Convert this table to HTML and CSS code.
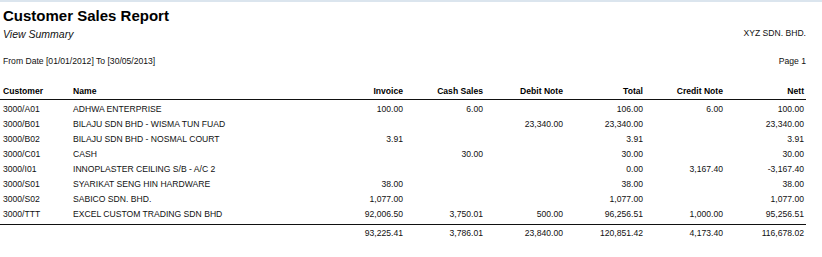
FILE: index.html
```html
<!DOCTYPE html>
<html>
<head>
<meta charset="utf-8">
<link rel="stylesheet" href="styles.css">
</head>
<body>
<div class="page">
  <div class="topbar"></div>
  <div class="head">
    <div class="head-left">
      <h1 class="title">Customer Sales Report</h1>
      <div class="subtitle">View Summary</div>
    </div>
    <div class="company">XYZ SDN. BHD.</div>
  </div>
  <div class="meta">
    <div>From Date [01/01/2012] To [30/05/2013]</div>
    <div>Page 1</div>
  </div>
  <table class="report">
    <colgroup>
      <col class="c-cust"><col class="c-name"><col class="c-num"><col class="c-num"><col class="c-num"><col class="c-num"><col class="c-num"><col class="c-nett">
    </colgroup>
    <thead>
      <tr>
        <th class="l first">Customer</th><th class="l">Name</th><th>Invoice</th><th>Cash Sales</th><th>Debit Note</th><th>Total</th><th>Credit Note</th><th class="last">Nett</th>
      </tr>
    </thead>
    <tbody>
      <tr><td class="l first">3000/A01</td><td class="l">ADHWA ENTERPRISE</td><td>100.00</td><td>6.00</td><td></td><td>106.00</td><td>6.00</td><td class="last">100.00</td></tr>
      <tr><td class="l first">3000/B01</td><td class="l">BILAJU SDN BHD - WISMA TUN FUAD</td><td></td><td></td><td>23,340.00</td><td>23,340.00</td><td></td><td class="last">23,340.00</td></tr>
      <tr><td class="l first">3000/B02</td><td class="l">BILAJU SDN BHD - NOSMAL COURT</td><td>3.91</td><td></td><td></td><td>3.91</td><td></td><td class="last">3.91</td></tr>
      <tr><td class="l first">3000/C01</td><td class="l">CASH</td><td></td><td>30.00</td><td></td><td>30.00</td><td></td><td class="last">30.00</td></tr>
      <tr><td class="l first">3000/I01</td><td class="l">INNOPLASTER CEILING S/B - A/C 2</td><td></td><td></td><td></td><td>0.00</td><td>3,167.40</td><td class="last">-3,167.40</td></tr>
      <tr><td class="l first">3000/S01</td><td class="l">SYARIKAT SENG HIN HARDWARE</td><td>38.00</td><td></td><td></td><td>38.00</td><td></td><td class="last">38.00</td></tr>
      <tr><td class="l first">3000/S02</td><td class="l">SABICO SDN. BHD.</td><td>1,077.00</td><td></td><td></td><td>1,077.00</td><td></td><td class="last">1,077.00</td></tr>
      <tr class="lastrow"><td class="l first">3000/TTT</td><td class="l">EXCEL CUSTOM TRADING SDN BHD</td><td>92,006.50</td><td>3,750.01</td><td>500.00</td><td>96,256.51</td><td>1,000.00</td><td class="last">95,256.51</td></tr>
    </tbody>
    <tfoot>
      <tr><td class="first"></td><td></td><td>93,225.41</td><td>3,786.01</td><td>23,840.00</td><td>120,851.42</td><td>4,173.40</td><td class="last">116,678.02</td></tr>
    </tfoot>
  </table>
</div>
</body>
</html>
```
FILE: styles.css
```css
html, body {
  margin: 0;
  padding: 0;
  background: #ffffff;
}
.page {
  width: 822px;
  height: 257px;
  font-family: "Liberation Sans", Arial, sans-serif;
  color: #111111;
  overflow: hidden;
}
.topbar {
  height: 2px;
  background: #dbe5ee;
}
.head {
  display: flex;
  justify-content: space-between;
  align-items: flex-end;
  padding: 0 16px 0 3px;
}
.title {
  margin: 5px 0 0 0;
  font-size: 15px;
  line-height: 17px;
  font-weight: bold;
  color: #000;
}
.subtitle {
  margin-top: 4px;
  font-size: 10.5px;
  line-height: 12px;
  font-style: italic;
}
.company {
  font-size: 8.6px;
  line-height: 12px;
  padding-bottom: 1px;
}
.meta {
  display: flex;
  justify-content: space-between;
  padding: 0 16px 0 3px;
  margin-top: 15px;
  font-size: 8.6px;
  line-height: 12px;
}
.report {
  margin-top: 17px;
  width: 806px;
  border-collapse: collapse;
  table-layout: fixed;
  font-size: 8.6px;
}
.c-cust { width: 73px; }
.c-name { width: 250px; }
.c-num { width: 80px; }
.c-nett { width: 83px; }
.report th, .report td {
  padding: 0;
  height: 15px;
  line-height: 15px;
  text-align: right;
  white-space: nowrap;
  vertical-align: middle;
}
.report th {
  font-weight: bold;
  color: #000;
  height: 14px;
  border-bottom: 1.5px solid #111;
}
.report .l { text-align: left; }
.report .first { padding-left: 3px; }
.report .last { padding-right: 2px; }
.report tbody tr:first-child td { padding-top: 2px; }
.report .lastrow td {
  padding-bottom: 2px;
  border-bottom: 1.5px solid #111;
}
.report tfoot td { height: 17px; }
```
